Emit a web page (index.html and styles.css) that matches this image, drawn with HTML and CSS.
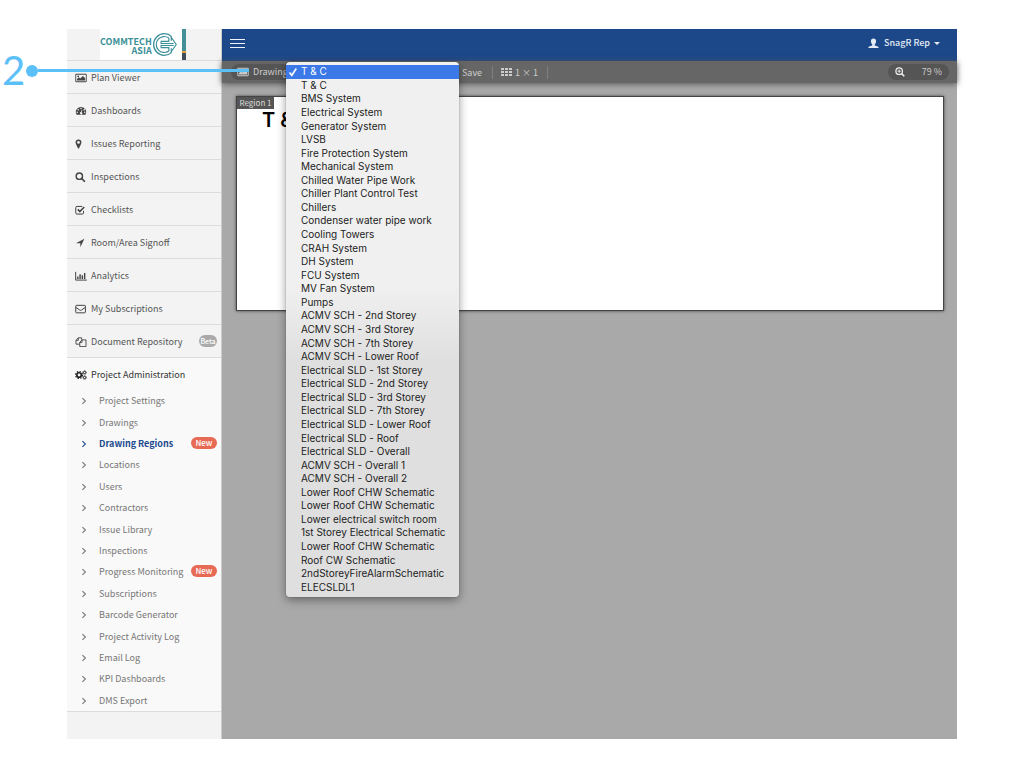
FILE: index.html
```html
<!DOCTYPE html>
<html lang="en">
<head>
<meta charset="utf-8">
<meta name="viewport" content="width=device-width, initial-scale=1">
<title>Drawing Regions</title>
<link rel="stylesheet" href="styles.css">
</head>
<body>
<svg class="sprite" aria-hidden="true">
  <symbol id="chev" viewBox="0 0 10 10"><path class="line" d="M3.400 2.200 6.400 5 3.400 7.800" stroke-width="1.100"/></symbol>
  <symbol id="image" viewBox="0 0 14 12"><path fill-rule="evenodd" d="M1 1h12q1 0 1 1v8q0 1-1 1H1q-1 0-1-1V2q0-1 1-1zM1.200 2.100v7.800h11.600V2.100z"/><path d="M2 9V7.500L4.500 5.200 6 6.600 9.300 3.600 12 6.300V9z"/><circle cx="3.600" cy="4" r="1.100"/></symbol>
</svg>

<div class="app">
  <aside class="sidebar">
    <a class="brand" href="#" aria-label="Commtech Asia">
      <span class="brand-name">COMMTECH<br>ASIA</span>
      <svg class="brand-mark line" viewBox="0 0 26 26">
        <path d="M20.500 4.800A11.200 11.200 0 1 0 20.500 21.200" stroke-width="1.300"/>
        <path d="M20 9.200V5.500L25.200 13 20 20.500V16.800" stroke-width="1.200"/>
        <path d="M17.500 6.200A8.300 8.300 0 1 0 17.500 19.800V16.200H9.500V14H22.500M17.500 6.200V9.800H9.500V12H22.500" stroke-width="1.200"/>
      </svg>
    </a>
    <nav>
      <ul class="nav">
        <li><a href="#"><svg class="icon" viewBox="0 0 14 12"><use href="#image"/></svg>Plan Viewer</a></li>
        <li><a href="#"><svg class="icon" viewBox="0 0 14 12"><path fill-rule="evenodd" d="M7 1.200a6 6 0 0 0-5.200 9.300h10.400A6 6 0 0 0 7 1.200zM7 2.200a.9.9 0 1 1 0 1.800.9.9 0 0 1 0-1.800zM3.700 3.600a.9.9 0 1 1 0 1.800.9.9 0 0 1 0-1.800zM2.500 6.600a.9.9 0 1 1 0 1.800.9.9 0 0 1 0-1.800zM11.500 6.600a.9.9 0 1 1 0 1.800.9.9 0 0 1 0-1.800zM10.600 3.600a.9.9 0 1 1-.1 1.700.9.900 0 0 1 .1-1.700zM7.900 4.500l.7.200-.8 2.700a1.400 1.400 0 1 1-.8-.1z"/></svg>Dashboards</a></li>
        <li><a href="#"><svg class="icon" viewBox="0 0 14 12"><path fill-rule="evenodd" d="M4 .5a3.500 3.500 0 0 1 3.500 3.600C7.500 5.800 5.500 9 4.700 11q-.7 1-1.400 0C2.500 9 .5 5.800.5 4.100A3.500 3.500 0 0 1 4 .5zM4 2.400a1.700 1.700 0 1 0 0 3.400 1.700 1.700 0 0 0 0-3.400z"/></svg>Issues Reporting</a></li>
        <li><a href="#"><svg class="icon line" viewBox="0 0 14 12"><circle cx="5" cy="5" r="3.800" stroke-width="1.700"/><path d="m7.800 7.800 3.300 3.300" stroke-width="2.100" stroke-linecap="round"/></svg>Inspections</a></li>
        <li><a href="#"><svg class="icon line" viewBox="0 0 14 12"><path d="M10 7v2.400q0 1.500-1.500 1.500H2.200Q.7 10.900.7 9.400V3.200q0-1.500 1.500-1.500h6.300" stroke-width="1.200"/><path d="m3.200 5.300 2.400 2.500 5.300-5.400" stroke-width="1.900"/></svg>Checklists</a></li>
        <li><a href="#"><svg class="icon" viewBox="0 0 14 12"><path d="M11 1 6.200 11V6.200H1z"/></svg>Room/Area Signoff</a></li>
        <li><a href="#"><svg class="icon line" viewBox="0 0 14 12"><path d="M.6 1v9.900H14" stroke-width="1.200"/><path d="M3.200 6.500v3.200M5.900 4v5.700M8.600 5.200v4.500M11.400 2.300v7.400" stroke-width="1.700"/></svg>Analytics</a></li>
        <li><a href="#"><svg class="icon line" viewBox="0 0 14 12" stroke-width="1.200"><rect x=".7" y="1.600" width="11.600" height="9" rx="1"/><path d="M.8 4 5.300 7.200q1.200.8 2.400 0L12.200 4"/></svg>My Subscriptions</a></li>
        <li><a href="#"><svg class="icon line" viewBox="0 0 14 12" stroke-width="1.100"><path d="M5.500 8.600H1V4L3.700 1h4v2.200M3.700 1v3H1M8.200 3.500H13v8H5.500V6.300zM8.200 3.500v3H5.500"/></svg>Document Repository<span class="badge badge-beta">Beta</span></a></li>
        <li class="open">
          <a href="#" aria-expanded="true"><svg class="icon line" viewBox="0 0 14 12"><circle cx="4.700" cy="6" r="2.700" stroke-width="2"/><circle cx="4.700" cy="6" r="4.200" stroke-width="1.300" stroke-dasharray="1.700 1.600"/><circle cx="11.300" cy="3" r="1.400" stroke-width="1.200"/><circle cx="11.300" cy="3" r="2.300" stroke-width=".8" stroke-dasharray="1 .8"/><circle cx="11.300" cy="9" r="1.400" stroke-width="1.200"/><circle cx="11.300" cy="9" r="2.300" stroke-width=".8" stroke-dasharray="1 .8"/></svg>Project Administration</a>
          <ul class="subnav">
            <li><a href="#"><svg class="chev"><use href="#chev"/></svg>Project Settings</a></li>
            <li><a href="#"><svg class="chev"><use href="#chev"/></svg>Drawings</a></li>
            <li><a class="current" href="#" aria-current="page"><svg class="chev"><use href="#chev"/></svg>Drawing Regions<span class="badge badge-new">New</span></a></li>
            <li><a href="#"><svg class="chev"><use href="#chev"/></svg>Locations</a></li>
            <li><a href="#"><svg class="chev"><use href="#chev"/></svg>Users</a></li>
            <li><a href="#"><svg class="chev"><use href="#chev"/></svg>Contractors</a></li>
            <li><a href="#"><svg class="chev"><use href="#chev"/></svg>Issue Library</a></li>
            <li><a href="#"><svg class="chev"><use href="#chev"/></svg>Inspections</a></li>
            <li><a href="#"><svg class="chev"><use href="#chev"/></svg>Progress Monitoring<span class="badge badge-new">New</span></a></li>
            <li><a href="#"><svg class="chev"><use href="#chev"/></svg>Subscriptions</a></li>
            <li><a href="#"><svg class="chev"><use href="#chev"/></svg>Barcode Generator</a></li>
            <li><a href="#"><svg class="chev"><use href="#chev"/></svg>Project Activity Log</a></li>
            <li><a href="#"><svg class="chev"><use href="#chev"/></svg>Email Log</a></li>
            <li><a href="#"><svg class="chev"><use href="#chev"/></svg>KPI Dashboards</a></li>
            <li><a href="#"><svg class="chev"><use href="#chev"/></svg>DMS Export</a></li>
          </ul>
        </li>
      </ul>
    </nav>
  </aside>

  <div class="content">
    <header class="topbar">
      <button class="burger" type="button" aria-label="Toggle menu"><span></span><span></span><span></span></button>
      <button class="user" type="button"><svg class="user-icon" viewBox="0 0 12 12"><path d="M6 .5c1.800 0 2.800 1.200 2.800 3 0 1.500-.6 2.800-1.400 3.400v1.200l3.300 1.300q.9.400.9 1.600H.4q0-1.200.9-1.600l3.300-1.300V6.900C3.800 6.300 3.200 5 3.200 3.500c0-1.800 1-3 2.800-3z"/></svg>SnagR Rep<span class="caret"></span></button>
    </header>

    <div class="toolbar">
      <div class="picker">
        <label for="drawing"><svg class="pic" viewBox="0 0 14 12"><use href="#image"/></svg>Drawing</label>
        <select id="drawing"><option>T &amp; C</option></select>
        <ul class="menu" role="listbox" aria-label="Drawing">
          <li role="option" aria-selected="true"><svg class="tick line" viewBox="0 0 10 10"><path d="M1.500 5.500 3.800 8.300 8.300 1.500" stroke-width="1.600"/></svg>T &amp; C</li>
          <li role="option">T &amp; C</li>
          <li role="option">BMS System</li>
          <li role="option">Electrical System</li>
          <li role="option">Generator System</li>
          <li role="option">LVSB</li>
          <li role="option">Fire Protection System</li>
          <li role="option">Mechanical System</li>
          <li role="option">Chilled Water Pipe Work</li>
          <li role="option">Chiller Plant Control Test</li>
          <li role="option">Chillers</li>
          <li role="option">Condenser water pipe work</li>
          <li role="option">Cooling Towers</li>
          <li role="option">CRAH System</li>
          <li role="option">DH System</li>
          <li role="option">FCU System</li>
          <li role="option">MV Fan System</li>
          <li role="option">Pumps</li>
          <li role="option">ACMV SCH - 2nd Storey</li>
          <li role="option">ACMV SCH - 3rd Storey</li>
          <li role="option">ACMV SCH - 7th Storey</li>
          <li role="option">ACMV SCH - Lower Roof</li>
          <li role="option">Electrical SLD - 1st Storey</li>
          <li role="option">Electrical SLD - 2nd Storey</li>
          <li role="option">Electrical SLD - 3rd Storey</li>
          <li role="option">Electrical SLD - 7th Storey</li>
          <li role="option">Electrical SLD - Lower Roof</li>
          <li role="option">Electrical SLD - Roof</li>
          <li role="option">Electrical SLD - Overall</li>
          <li role="option">ACMV SCH - Overall 1</li>
          <li role="option">ACMV SCH - Overall 2</li>
          <li role="option">Lower Roof CHW Schematic</li>
          <li role="option">Lower Roof CHW Schematic</li>
          <li role="option">Lower electrical switch room</li>
          <li role="option">1st Storey Electrical Schematic</li>
          <li role="option">Lower Roof CHW Schematic</li>
          <li role="option">Roof CW Schematic</li>
          <li role="option">2ndStoreyFireAlarmSchematic</li>
          <li role="option">ELECSLDL1</li>
        </ul>
      </div>
      <button class="tool" type="button">Save</button>
      <button class="tool ruled" type="button"><svg class="grid-icon" viewBox="0 0 11 8"><path d="M0 0h3v2H0zM4 0h3v2H4zM8 0h3v2H8zM0 3h3v2H0zM4 3h3v2H4zM8 3h3v2H8zM0 6h3v2H0zM4 6h3v2H4zM8 6h3v2H8z"/></svg>1 × 1</button>
      <button class="zoom" type="button"><svg class="zoom-icon line" viewBox="0 0 12 12"><circle cx="5" cy="5" r="3.900" stroke-width="1.500"/><path d="m7.800 7.800 3.300 3.300" stroke-width="2"/><path d="M5 3v4M3 5h4" stroke-width="1.100"/></svg>79 %</button>
    </div>

    <main class="stage">
      <section class="region" aria-label="Region 1">
        <span class="region-tag">Region 1</span>
        <h1>T &amp;</h1>
      </section>
    </main>
  </div>
</div>

<div class="callout"><span class="callout-number">2</span><span class="callout-dot"></span><span class="callout-line"></span></div>
</body>
</html>
```
FILE: styles.css
```css
* { box-sizing: border-box; }

body {
  margin: 0;
  padding: 29px 67px;
  background: #fff;
  font: 9px/14px "Noto Sans CJK SC", "Open Sans", sans-serif;
  color: #555;
}

ul { margin: 0; padding: 0; list-style: none; }
a { color: inherit; text-decoration: none; }
button { border: 0; padding: 0; background: none; font: inherit; color: inherit; }
svg { fill: currentColor; flex: none; }
.line { fill: none; stroke: currentColor; }
.sprite { position: absolute; width: 0; height: 0; }

.app { display: flex; min-height: calc(100vh - 58px); }

/* Sidebar */
.sidebar { width: 155px; flex: none; background: #f3f3f3; border-right: 1px solid #ccc; }

.brand {
  display: flex;
  align-items: center;
  justify-content: space-between;
  width: 86px;
  height: 31px;
  margin-left: 33px;
  padding-right: 7px;
  background: #fff;
  border-right: 4px solid #458f96;
  border-image: linear-gradient(#458f96 0 70%, #e0a03c 70% 76%, #3f4c5c 76%) 1;
  color: #3b8f98;
}
.brand-name { padding-top: 3px; font: bold 9px/9px "Liberation Sans Narrow", "Noto Sans CJK SC", sans-serif; text-align: right; }
.brand-mark { width: 25px; height: 25px; }

.nav > li { border-top: 1px solid #dcdcdc; }
.nav > li > a { display: flex; align-items: center; height: 32px; padding: 2px 4px 0 8px; }
.icon { width: 12px; height: 10px; margin-right: 4px; color: #444; }
.nav .open { background: #f9f9f9; border-bottom: 1px solid #dcdcdc; }
.nav .open > a, .nav .open .icon { color: #222; }
.nav .open > a { color: #333; }

.subnav { display: grid; grid-auto-rows: 1fr; height: 321px; color: #777; }
.subnav a { display: flex; align-items: center; height: 100%; padding: 1px 4px 0 12px; white-space: nowrap; }
.chev { width: 10px; height: 10px; margin-right: 10px; }
.subnav .current { color: #1c4a8f; font-weight: bold; }

.badge { margin: 0 0 2px auto; border-radius: 6px; color: #fff; font-size: 8px; line-height: 12px; text-align: center; }
.badge-beta { width: 18px; background: #aaa; font-size: 7px; font-weight: 500; }
.badge-new { width: 26px; background: #e66a54; font-weight: 500; }

/* Top bar */
.content { flex: 1; min-width: 0; display: flex; flex-direction: column; background: #a9a9a9; }
.topbar { display: flex; justify-content: space-between; align-items: center; height: 32px; padding: 0 17px 4px 8px; background: #1c4889; color: #e4ebf5; }
.burger { display: grid; gap: 3px; width: 15px; }
.burger span { height: 1px; background: #f0f4fa; }
.user { display: flex; align-items: center; font-weight: 500; }
.user-icon { width: 11px; height: 11px; margin-right: 5px; }
.caret { margin-left: 4px; border: 3px solid transparent; border-top-color: currentColor; border-bottom: 0; }

.toolbar {
  display: flex;
  align-items: center;
  height: 22px;
  padding: 0 8px 0 9px;
  background: #666;
  box-shadow: 0 1px 6px #555;
  color: #ccc;
  position: relative;
}
.picker { position: relative; display: flex; align-items: center; width: 227px; height: 16px; padding-left: 6px; border-radius: 8px; background: #555; }
.picker label { display: flex; align-items: center; }
.pic { width: 12px; height: 10px; margin-right: 4px; }
.picker select { width: 160px; height: 14px; margin-left: 4px; border: 0; padding: 0; background: #555; color: #ccc; font: inherit; }
.tool { height: 13px; padding: 0 10px 0 4px; display: flex; align-items: center; line-height: 13px; }
.ruled { border: solid #808080; border-width: 0 1px; padding: 0 9px 0 8px; word-spacing: normal; }
.grid-icon { width: 11px; height: 8px; margin-right: 3px; }
.zoom { display: flex; align-items: center; justify-content: space-between; width: 61px; height: 16px; margin-left: auto; padding: 0 7px; border-radius: 8px; background: #555; }
.zoom-icon { width: 10px; height: 10px; color: #eee; }

/* Open drop-down */
.menu {
  position: absolute;
  left: 55px;
  top: -2px;
  z-index: 1;
  display: grid;
  grid-auto-rows: 1fr;
  width: 173px;
  height: 535px;
  padding: 3px 0;
  border-radius: 4px;
  background: linear-gradient(#f0f0f0 0 42%, #dfdfdf 56%);
  box-shadow: 0 3px 10px #0006, 0 0 1px #0008;
  color: #222;
  font: 10px/13px Inter, Roboto, sans-serif;
}
.menu li { display: flex; align-items: center; padding-left: 15px; white-space: nowrap; }
.menu [aria-selected="true"] { padding-left: 2px; background: #3b79e8; color: #fff; }
.tick { width: 10px; height: 10px; margin-right: 3px; }

/* Drawing canvas */
.stage { flex: 1; padding: 13px 13px 13px 14px; }
.region { height: 215px; border: 1px solid #444; background: #fff; box-shadow: 0 0 3px #444; }
.region-tag { display: block; width: 37px; background: #555; color: #ddd; font-size: 8px; line-height: 12px; text-align: center; }
.region h1 { margin: 0; padding-left: 25px; font: 600 20px/22px Inter, sans-serif; color: #000; }

/* Numbered pointer drawn across the page edge */
.callout { position: absolute; left: 2px; top: 50px; z-index: 2; display: flex; align-items: center; height: 41px; color: #5bc0f8; }
.callout-number { width: 24px; font: 40px/41px Lato, sans-serif; }
.callout-dot { width: 12px; height: 12px; border-radius: 50%; background: currentColor; }
.callout-line { width: 211px; height: 3px; background: currentColor; }
```
